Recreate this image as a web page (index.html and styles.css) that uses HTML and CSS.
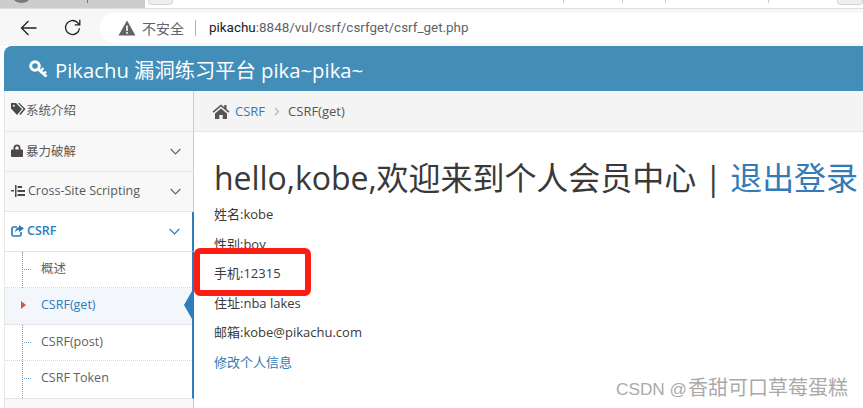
FILE: index.html
```html
<!DOCTYPE html>
<html lang="zh">
<head>
  <meta charset="UTF-8">
  <title>Pikachu</title>
  <link rel="stylesheet" href="styles.css">
</head>
<body>
  <div class="tab-strip">
    <div class="tab-left"><span class="tab-dot"></span><span class="tab-tick"></span></div>
    <div class="tab-right">
      <span class="tab-btn"></span>
      <span class="tick t1"></span>
      <span class="tick t2"></span>
      <span class="tick t3"></span>
      <span class="tick t4"></span>
      <span class="tab-btn b2"></span>
    </div>
  </div>
  <div class="toolbar">
    <svg class="tool-icon" width="17" height="16" viewBox="0 0 17 16"><path d="M16.500 8H1.500M8.500 1 1.500 8l7 7" fill="none" stroke="#222" stroke-width="1.300"/></svg>
    <svg class="tool-icon" width="17" height="17" viewBox="0 0 17 17"><path d="M15.500 9.200A7 7 0 1 1 13.400 3.500L15.500 5.600M15.800 .8v5h-5" fill="none" stroke="#222" stroke-width="1.300"/></svg>
    <div class="address">
      <svg width="18" height="16" viewBox="0 0 18 16"><path d="M9 0.500 17.500 15.500H0.500Z" fill="#5f6368"/><path d="M8.200 5.500h1.600v5.500h-1.600zM8.200 12h1.600v1.700h-1.600z" fill="#fff"/></svg>
      <span class="insecure">不安全</span>
      <span class="addr-sep"></span>
      <span class="url"><b>pikachu</b>:8848/vul/csrf/csrfget/csrf_get.php</span>
    </div>
  </div>

  <div class="page">
    <div class="navbar">
      <svg width="19" height="18" viewBox="0 0 19 18"><circle cx="6" cy="6" r="4.300" fill="none" stroke="#fff" stroke-width="3"/><path d="M8.500 8.500 17.500 16.500" fill="none" stroke="#fff" stroke-width="3"/><path d="M12 10.500 14.500 8M15 13.500 17 11.500" fill="none" stroke="#fff" stroke-width="2.400"/></svg>
      <span>Pikachu 漏洞练习平台 pika~pika~</span>
    </div>
    <div class="layout">
      <aside class="sidebar">
        <div class="menu-item first">
          <svg class="menu-icon" width="15" height="14" viewBox="0 0 15 14"><path d="M0 1h5l6 6-5 6-6-6.500ZM7 1h1.500l6 6-5 6-1.200-1 4.200-5Z" fill="#4a4a4a"/><circle cx="2.800" cy="3.700" r="1" fill="#f8f8f8"/></svg>
          <span>系统介绍</span>
        </div>
        <div class="menu-item">
          <svg class="menu-icon" width="12" height="13" viewBox="0 0 12 13"><path d="M2.500 5.500V4a3.500 3.500 0 0 1 7 0v1.500H11a1 1 0 0 1 1 1V12a1 1 0 0 1-1 1H1a1 1 0 0 1-1-1V6.500a1 1 0 0 1 1-1ZM4.300 5.500h3.400V4a1.700 1.700 0 0 0-3.400 0Z" fill="#4a4a4a" fill-rule="evenodd"/></svg>
          <span class="gap">暴力破解</span>
          <svg class="chev" width="11" height="7" viewBox="0 0 11 7"><path d="M.7 1l4.800 4.800L10.300 1" fill="none" stroke="#666" stroke-width="1.200"/></svg>
        </div>
        <div class="menu-item">
          <svg class="menu-icon" width="14" height="12" viewBox="0 0 14 12"><path d="M0 5h3v1.500H0ZM4 0h1.500v12H4ZM6.500 1H11v2H6.500ZM6.500 5H14v2H6.500ZM6.500 9H14v2H6.500Z" fill="#4a4a4a"/></svg>
          <span class="gap">Cross-Site Scripting</span>
          <svg class="chev" width="11" height="7" viewBox="0 0 11 7"><path d="M.7 1l4.800 4.800L10.300 1" fill="none" stroke="#666" stroke-width="1.200"/></svg>
        </div>
        <div class="menu-item open">
          <svg class="menu-icon" width="13" height="12" viewBox="0 0 13 12"><path d="M10 7v2.500A1.500 1.500 0 0 1 8.500 11h-6A1.500 1.500 0 0 1 1 9.500v-6A1.500 1.500 0 0 1 2.500 2H6" fill="none" stroke="#2b7dbc" stroke-width="1.700"/><path d="M8 0l5 3.500L8 7V5C6 5 4.500 6 4 8c0-3.500 1.500-5.500 4-6Z" fill="#2b7dbc"/></svg>
          <span class="gap">CSRF</span>
          <svg class="chev" width="11" height="7" viewBox="0 0 11 7"><path d="M.7 1l4.800 4.800L10.300 1" fill="none" stroke="#2b7dbc" stroke-width="1.200"/></svg>
        </div>
        <ul class="submenu">
          <li class="sub-item">概述</li>
          <li class="sub-item active">CSRF(get)</li>
          <li class="sub-item">CSRF(post)</li>
          <li class="sub-item">CSRF Token</li>
        </ul>
        <div class="side-rest"></div>
      </aside>
      <main class="content">
        <div class="breadcrumb">
          <svg width="18" height="15" viewBox="0 0 18 15"><path d="M9 0.500 0.500 7.500l1 1.200L9 2.600l7.500 6.100 1-1.200-3-2.500V1h-2.200v2.200ZM3 9.500 9 4.500l6 5V15h-4.300v-4H7.300v4H3Z" fill="#555"/></svg>
          <a href="#">CSRF</a>
          <svg class="crumb-sep" width="6" height="9" viewBox="0 0 6 9"><path d="M1 1l3.500 3.500L1 8" fill="none" stroke="#b8b8b8" stroke-width="1.300"/></svg>
          <span>CSRF(get)</span>
        </div>
        <div class="member">
          <h1>hello,kobe,欢迎来到个人会员中心 | <a href="#">退出登录</a></h1>
          <p>姓名:kobe</p>
          <p>性别:boy</p>
          <p>手机:12315</p>
          <p>住址:nba lakes</p>
          <p>邮箱:kobe@pikachu.com</p>
          <a class="edit" href="#">修改个人信息</a>
        </div>
      </main>
    </div>
    <div class="red-mark"></div>
  </div>
  <div class="watermark"><span class="wm-name">CSDN @</span>香甜可口草莓蛋糕</div>
</body>
</html>
```

FILE: styles.css
```css
* { box-sizing: border-box; margin: 0; padding: 0; }
html, body { height: 100%; overflow: hidden; }
body { position: relative; width: 863px; height: 408px; background: #fff; font-family: "Open Sans", "Noto Sans CJK SC", sans-serif; font-size: 13px; color: #393939; }
a { color: #337ab7; text-decoration: none; }

.tab-strip { display: flex; height: 9px; background: #fff; border-bottom: 1px solid #dfdfdf; }
.tab-left { width: 145px; background: #cdcdcd; position: relative; overflow: hidden; }
.tab-dot { position: absolute; left: 13px; top: -9px; width: 17px; height: 12px; border-radius: 50%; background: #7a7a7a; }
.tab-tick { position: absolute; left: 87px; top: 0; width: 1px; height: 3px; background: #777; }
.tab-right { flex: 1; display: flex; align-items: flex-start; padding-left: 3px; overflow: hidden; }
.tab-btn { width: 25px; height: 5px; background: #eee; border: 1px solid #d5d5d5; border-top: 0; border-radius: 0 0 4px 4px; }
.tab-btn.b2 { margin-left: 68px; width: 26px; }
.tick { width: 1px; height: 3px; background: #ccc; }
.t1 { margin-left: 390px; }
.t2 { margin-left: 58px; }
.t3 { margin-left: 42px; }
.t4 { margin-left: 102px; }

.toolbar { display: flex; align-items: center; height: 37px; padding-left: 20px; background: #f7f7f7; }
.tool-icon { flex: none; margin-right: 27px; }
.address { display: flex; align-items: center; height: 30px; margin-left: -8px; padding-left: 18px; flex: 1; font-size: 14px; background: #fff; border-radius: 15px 0 0 15px; }
.insecure { margin-left: 6px; color: #5f6368; }
.addr-sep { width: 1px; height: 16px; margin: 0 13px 0 11px; background: #b0b0b0; }
.url { color: #5f6368; font-family: "Roboto", "Noto Sans", sans-serif; font-size: 13.450px; white-space: nowrap; }
.url b { font-weight: 400; color: #202124; }

.page { position: absolute; left: 4px; top: 46px; right: 0; bottom: 0; }
.navbar { display: flex; align-items: center; gap: 7px; height: 45px; padding-left: 25px; background: #438eb9; border-radius: 8px 0 0 0; color: #fff; font-size: 20.300px; white-space: nowrap; }
.layout { display: flex; height: 317px; }
.sidebar { display: flex; flex-direction: column; width: 190px; background: #f8f8f8; border-left: 1px solid #e8e8e8; }
.menu-item { display: flex; align-items: center; height: 40px; padding: 0 12px 2px 6px; border-bottom: 1px solid #e5e5e5; border-right: 1px solid #ccc; color: #585858; font-size: 12.500px; white-space: nowrap; }
.menu-item.first { height: 41px; padding-bottom: 4px; }
.menu-icon { flex: none; }
.gap { margin-left: 3px; }
.chev { margin-left: auto; margin-top: 1px; }
.menu-item.open { background: #fff; color: #2b7dbc; font-weight: 600; border-right: 2px solid #2b7dbc; }

.submenu { list-style: none; background: #fff; border-right: 2px solid #2b7dbc; border-bottom: 1px solid #e5e5e5; position: relative; }
.submenu::before { content: ""; position: absolute; left: 17px; top: 0; bottom: 0; border-left: 1px dotted #6aa5cf; }
.sub-item { position: relative; height: 36.400px; padding-left: 36px; line-height: 34px; border-bottom: 1px dotted #d5d5d5; color: #616161; font-size: 12.500px; }
.sub-item:last-child { border-bottom: 0; }
.sub-item::before { content: ""; position: absolute; left: 19px; top: 17px; width: 7px; border-top: 1px dotted #6aa5cf; }
.sub-item.active { background: #f3f6fa; color: #2b7dbc; }
.sub-item.active::before { left: 16px; top: 13px; width: 0; height: 0; border-top: 4px solid transparent; border-bottom: 4px solid transparent; border-left: 5px solid #c86139; }
.sub-item.active::after { content: ""; position: absolute; right: 0; top: 3px; border-top: 14px solid transparent; border-bottom: 14px solid transparent; border-right: 8px solid #2b7dbc; }
.side-rest { flex: 1; border-right: 1px solid #ccc; }

.content { flex: 1; min-width: 0; }
.breadcrumb { display: flex; align-items: center; height: 41px; padding-left: 18px; background: #f4f4f4; border-bottom: 1px solid #e5e5e5; color: #555; font-size: 13px; }
.breadcrumb a { margin-left: 5px; }
.crumb-sep { margin: 0 8px 0 9px; }
.member { padding: 27px 0 0 20px; white-space: nowrap; }
.member h1 { font-size: 32px; font-weight: 400; line-height: 38px; letter-spacing: -0.050px; color: #393939; margin-bottom: 7px; }
.member p { height: 29.600px; line-height: 20px; font-size: 13px; }
.edit { font-size: 13px; line-height: 20px; }

.red-mark { position: absolute; left: 190px; top: 202px; width: 117px; height: 48px; border: 6px solid #fb1c12; border-radius: 6px; }
.watermark { position: absolute; right: 15px; bottom: 7px; color: #aaa; font-family: "Noto Sans CJK SC", sans-serif; font-size: 20px; white-space: nowrap; }
.wm-name { font-family: "Liberation Sans", sans-serif; font-size: 17.200px; margin-right: 1px; }
```
